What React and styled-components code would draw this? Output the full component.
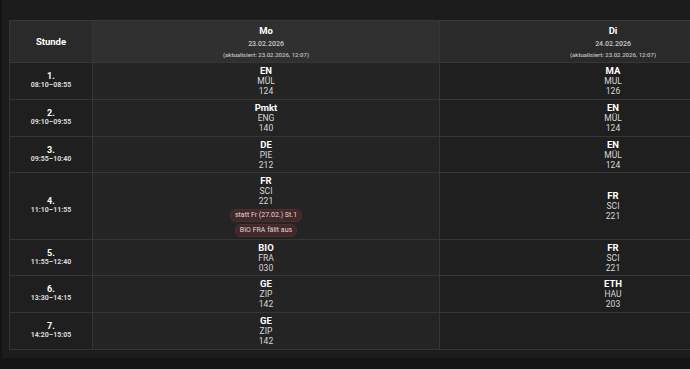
import React from 'react';
import styled, { createGlobalStyle } from 'styled-components';

const Global = createGlobalStyle`
  html, body {
    margin: 0;
    padding: 0;
    background: #141414;
    overflow: hidden;
    font-family: Roboto, "Liberation Sans", sans-serif;
  }
`;

const Panel = styled.div`
  margin-left: 2px;
  height: 358px;
  box-sizing: border-box;
  background: #1c1c1c;
  padding: 20px 0 0 7px;
  overflow: hidden;
`;

const Table = styled.table`
  border-collapse: collapse;
  table-layout: fixed;
  width: 777px;
  color: #fff;
  text-align: center;
`;

const HeadCell = styled.th`
  height: 41px;
  padding: 0;
  border: 1px solid #373737;
  background: ${p => (p.$today ? '#303030' : '#2a2a2a')};
  vertical-align: middle;
  font-weight: 700;
`;

const Cell = styled.td`
  height: ${p => p.$h}px;
  padding: 0;
  border: 1px solid #363636;
  background: ${p => (p.$today ? '#242424' : '#1f1f1f')};
  vertical-align: middle;
`;

const HeadTitle = styled.div`
  font-size: 9.5px;
  font-weight: 700;
  color: #fff;
  line-height: 12px;
`;

const DayName = styled(HeadTitle)`
  margin-top: 1px;
`;

const DayDate = styled.div`
  font-size: 7px;
  font-weight: 500;
  color: #c8c8c8;
  line-height: 12px;
  margin-top: 1px;
`;

const Updated = styled.div`
  font-size: 6px;
  font-weight: 500;
  color: #c0c0c0;
  line-height: 10px;
`;

const PeriodNo = styled.div`
  font-size: 9px;
  font-weight: 700;
  color: #fff;
  line-height: 9px;
`;

const PeriodTime = styled.div`
  font-size: 7px;
  font-weight: 700;
  color: #dadada;
  line-height: 9px;
`;

const Subject = styled.div`
  font-size: 9.5px;
  font-weight: 700;
  color: #fff;
  line-height: 10px;
`;

const Detail = styled.div`
  font-size: 8.5px;
  color: #d8d8d8;
  line-height: 10px;
`;

const Notes = styled.div`
  display: flex;
  flex-direction: column;
  align-items: center;
  gap: 2px;
  margin-top: 3px;
`;

const Badge = styled.span`
  display: inline-block;
  font-size: 7px;
  line-height: 11px;
  padding: 0 4px;
  border-radius: 6px;
  color: #e2d8d8;
  background: #412929;
  border: 1px solid #4c3030;
`;

const periods = [
  { n: '1.', t: '08:10–08:55', h: 36 },
  { n: '2.', t: '09:10–09:55', h: 36 },
  { n: '3.', t: '09:55–10:40', h: 35 },
  { n: '4.', t: '11:10–11:55', h: 66 },
  { n: '5.', t: '11:55–12:40', h: 35 },
  { n: '6.', t: '13:30–14:15', h: 36 },
  { n: '7.', t: '14:20–15:05', h: 36 },
];

const days = [
  {
    name: 'Mo',
    date: '23.02.2026',
    updated: '(aktualisiert: 23.02.2026, 12:07)',
    today: true,
    lessons: [
      { s: 'EN', t: 'MÜL', r: '124' },
      { s: 'Pmkt', t: 'ENG', r: '140' },
      { s: 'DE', t: 'PIE', r: '212' },
      { s: 'FR', t: 'SCI', r: '221', notes: ['statt Fr (27.02.) St.1', 'BIO FRA fällt aus'] },
      { s: 'BIO', t: 'FRA', r: '030' },
      { s: 'GE', t: 'ZIP', r: '142' },
      { s: 'GE', t: 'ZIP', r: '142' },
    ],
  },
  {
    name: 'Di',
    date: '24.02.2026',
    updated: '(aktualisiert: 23.02.2026, 12:07)',
    lessons: [
      { s: 'MA', t: 'MUL', r: '126' },
      { s: 'EN', t: 'MÜL', r: '124' },
      { s: 'EN', t: 'MÜL', r: '124' },
      { s: 'FR', t: 'SCI', r: '221' },
      { s: 'FR', t: 'SCI', r: '221' },
      { s: 'ETH', t: 'HAU', r: '203' },
      null,
    ],
  },
];

export default function App() {
  return (
    <>
      <Global />
      <Panel>
        <Table>
          <colgroup>
            <col style={{ width: 83 }} />
            {days.map(d => (
              <col key={d.name} style={{ width: 347 }} />
            ))}
          </colgroup>
          <thead>
            <tr>
              <HeadCell>
                <HeadTitle>Stunde</HeadTitle>
              </HeadCell>
              {days.map(d => (
                <HeadCell key={d.name} $today={d.today}>
                  <DayName>{d.name}</DayName>
                  <DayDate>{d.date}</DayDate>
                  <Updated>{d.updated}</Updated>
                </HeadCell>
              ))}
            </tr>
          </thead>
          <tbody>
            {periods.map((p, i) => (
              <tr key={p.n}>
                <Cell $h={p.h}>
                  <PeriodNo>{p.n}</PeriodNo>
                  <PeriodTime>{p.t}</PeriodTime>
                </Cell>
                {days.map(d => {
                  const l = d.lessons[i];
                  return (
                    <Cell key={d.name} $h={p.h} $today={d.today}>
                      {l && (
                        <>
                          <Subject>{l.s}</Subject>
                          <Detail>{l.t}</Detail>
                          <Detail>{l.r}</Detail>
                          {l.notes && (
                            <Notes>
                              {l.notes.map(n => (
                                <Badge key={n}>{n}</Badge>
                              ))}
                            </Notes>
                          )}
                        </>
                      )}
                    </Cell>
                  );
                })}
              </tr>
            ))}
          </tbody>
        </Table>
      </Panel>
    </>
  );
}
